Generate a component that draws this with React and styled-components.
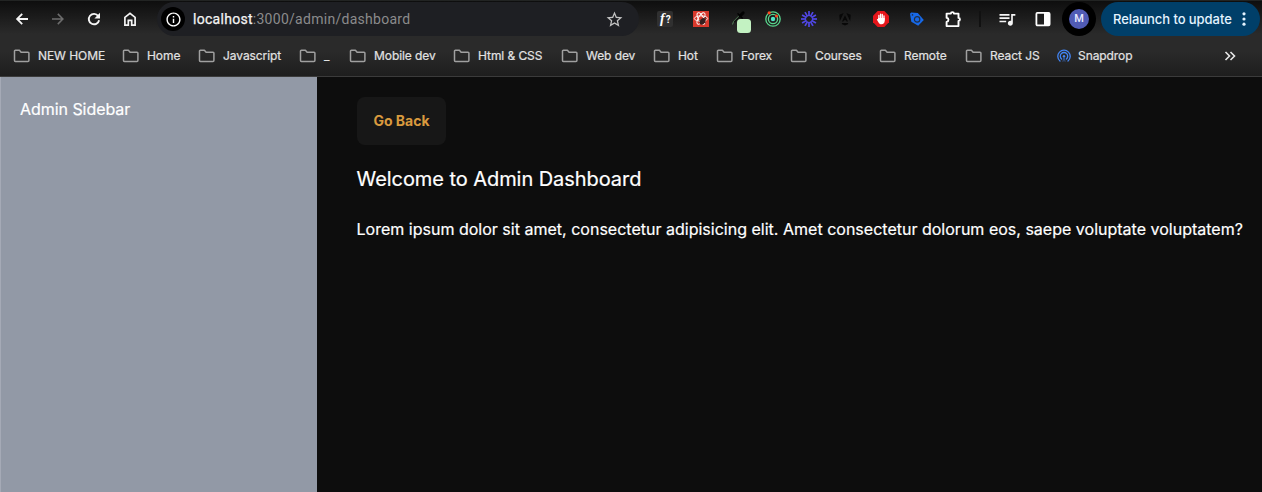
import React from 'react';
import styled, { createGlobalStyle } from 'styled-components';
import { MdStarBorder, MdInfoOutline, MdQueueMusic } from 'react-icons/md';

const GlobalStyle = createGlobalStyle`
  * { box-sizing: border-box; }
  body { margin: 0; background: #0d0d0d; font-family: Inter, "Liberation Sans", sans-serif; }
`;

const Window = styled.div`
  display: flex;
  flex-direction: column;
  width: 100%;
  height: 100vh;
  overflow: hidden;
`;

const Chrome = styled.header`
  flex: none;
  height: 77px;
  border-top: 1px solid #222423;
  border-bottom: 1px solid #3b3b3b;
  background: linear-gradient(#0e0e0e 0, #2a2a2a 33px, #2a2a2a 50px, #1e1e1e 75px);
`;

const Toolbar = styled.div`
  display: flex;
  align-items: center;
  height: 34px;
  margin-top: 1px;
  padding: 0 2px 0 4px;
`;

const ToolButton = styled.span`
  display: flex;
  align-items: center;
  justify-content: center;
  flex: none;
  width: 36px;
  height: 34px;
  color: ${(p) => (p.$muted ? '#6d6d6d' : '#f5f5f5')};
`;

const AddressBar = styled.div`
  display: flex;
  align-items: center;
  flex: none;
  width: 482px;
  height: 34px;
  margin: 0 8px 0 9px;
  padding: 0 15px 0 4px;
  border-radius: 17px;
  background: #1e1f23;
`;

const InfoBadge = styled.span`
  display: flex;
  align-items: center;
  justify-content: center;
  width: 24px;
  height: 24px;
  border-radius: 50%;
  background: #000;
  color: #fff;
`;

const Url = styled.span`
  flex: 1;
  margin-left: 8px;
  color: #8b8b8c;
  font: 400 14px Roboto, sans-serif;
  letter-spacing: 0.28px;
`;

const Host = styled.span`
  color: #f4f4f4;
  -webkit-text-stroke: 0.25px;
`;

const Divider = styled.span`
  flex: none;
  width: 2px;
  height: 16px;
  margin: 0 8px;
  background: #111;
`;

const Profile = styled.span`
  display: flex;
  align-items: center;
  justify-content: center;
  flex: none;
  width: 34px;
  height: 34px;
  margin: 0 5px 0 1px;
  border-radius: 50%;
  background: #000;
`;

const Avatar = styled.span`
  width: 20px;
  height: 20px;
  border-radius: 50%;
  background: #505bb5;
  color: #e8eaff;
  font: 500 11px/20px Roboto, sans-serif;
  text-align: center;
`;

const Relaunch = styled.div`
  display: flex;
  align-items: center;
  justify-content: space-between;
  flex: none;
  width: 159px;
  height: 34px;
  padding: 0 14px 0 12px;
  border-radius: 17px;
  background: #003f69;
  color: #e4f3ff;
  font-size: 13px;
  font-weight: 500;
  letter-spacing: -0.06px;
  white-space: nowrap;
`;

const Bookmarks = styled.nav`
  display: flex;
  align-items: center;
  height: 39px;
  padding-left: 13px;
`;

const Bookmark = styled.span`
  display: flex;
  align-items: center;
  gap: 7px;
  flex: none;
  width: ${(p) => p.$width}px;
  color: #e2e2e2;
  font-size: 12px;
  letter-spacing: -0.07px;
  -webkit-text-stroke: 0.2px;
  white-space: nowrap;
`;

const Overflow = styled.span`
  display: flex;
  margin-left: 47px;
`;

const Page = styled.div`
  display: flex;
  flex: 1;
  -webkit-text-stroke: 0.2px;
`;

const Sidebar = styled.aside`
  flex: none;
  width: 317px;
  padding: 20px 19px;
  border-left: 1px solid #a5aab6;
  background: #9299a6;
  color: #fff;
  font-size: 16px;
  letter-spacing: -0.05px;
  line-height: 24px;
`;

const Content = styled.main`
  flex: 1;
  padding: 20px 0 0 40px;
  background: #0d0d0d;
  color: #fff;
`;

const BackButton = styled.button`
  display: block;
  width: 89px;
  height: 48px;
  padding: 0 0 2px;
  border: 0;
  border-radius: 8px;
  background: #171717;
  color: #d99a3e;
  font: 700 14px Inter, sans-serif;
  -webkit-text-stroke: 0;
`;

const Title = styled.h1`
  margin: 20px 0 0;
  font-size: 20px;
  font-weight: 400;
  letter-spacing: -0.06px;
  text-indent: -0.5px;
  line-height: 28px;
  white-space: nowrap;
`;

const Paragraph = styled.p`
  margin: 24px 0 0;
  font-size: 16px;
  line-height: 24px;
  text-indent: -0.5px;
  letter-spacing: 0.008px;
  white-space: nowrap;
`;

const Svg = ({ size = 16, children, ...rest }) => (
  <svg width={size} height={size} viewBox={`0 0 ${size} ${size}`} fill="none" {...rest}>{children}</svg>
);

const BackIcon = () => (
  <Svg stroke="currentColor" strokeWidth="1.8">
    <path d="M14 8H3.4M8.2 2.9 3.1 8l5.1 5.1" />
  </Svg>
);

const ForwardIcon = () => (
  <Svg stroke="currentColor" strokeWidth="1.5">
    <path d="M2 8h10.6M7.8 2.9 12.9 8l-5.1 5.1" />
  </Svg>
);

const ReloadIcon = () => (
  <Svg stroke="currentColor" strokeWidth="1.9">
    <path d="M13.1 9.2A5.2 5.2 0 1 1 12.2 5" />
    <path d="M14 1.8v5.6H8.4z" fill="currentColor" stroke="none" />
  </Svg>
);

const HomeIcon = () => (
  <Svg stroke="currentColor" strokeWidth="1.7">
    <path d="M2.9 14.1V6.3L8 2.4l5.1 3.9v7.8H9.7V9.4H6.3v4.7z" />
  </Svg>
);

const FolderIcon = () => (
  <svg width="18" height="14" viewBox="0 0 18 14" fill="none" stroke="#a0a0a0" strokeWidth="1.5" strokeLinejoin="round">
    <path d="M1.5 2.2c0-.6.3-.9.9-.9h4l1.7 1.9h6.9c.6 0 .9.3.9.9v7.4c0 .6-.3.9-.9.9H2.4c-.6 0-.9-.3-.9-.9z" />
  </svg>
);

const FontIcon = () => (
  <Svg>
    <rect width="16" height="16" rx="2" fill="#303030" />
    <text x="3" y="12" fill="#fff" fontFamily="Liberation Serif" fontStyle="italic" fontWeight="700" fontSize="14">f</text>
    <text x="8.8" y="11.5" fill="#fff" fontFamily="Roboto" fontWeight="700" fontSize="10">?</text>
  </Svg>
);

const ReactBugIcon = () => (
  <Svg>
    <path d="M0 0h16v16H0z" fill="#d9392c" />
    <g stroke="#fff" strokeWidth="0.9">
      <ellipse cx="8" cy="7.5" rx="6.7" ry="2.6" />
      <ellipse cx="8" cy="7.5" rx="6.4" ry="2.6" transform="rotate(60 8 7.5)" />
      <ellipse cx="8" cy="7.5" rx="6.4" ry="2.6" transform="rotate(120 8 7.5)" />
    </g>
    <ellipse cx="9.6" cy="10.3" rx="2.5" ry="3.6" fill="#35201f" transform="rotate(35 9.6 10.3)" />
    <path d="M6 9.5l7 2.5M7 13l5.5-5M11 7l2-.5" stroke="#35201f" strokeWidth=".8" />
  </Svg>
);

const PickerIcon = () => (
  <svg width="20" height="22" viewBox="0 0 20 22" fill="none">
    <path d="M1.4 16.5 2.5 13.7 8.5 7.6" stroke="#4d7251" strokeWidth="1.1" />
    <path d="M3.3 14.3 9.3 8.2" stroke="#111" strokeWidth="1.6" />
    <path d="m9.1 7.9 3-3" stroke="#030303" strokeWidth="3" strokeLinecap="round" />
    <path d="m7 5.8 4.2 4.2" stroke="#030303" strokeWidth="1.5" strokeLinecap="round" />
    <rect x="6" y="11" width="14" height="14" rx="3.5" fill="#c3f2c2" />
  </svg>
);

const Picker = styled.span`
  display: flex;
  flex: none;
  width: 36px;
  height: 34px;
  padding: 6px 0 0 12px;
  svg { overflow: visible; }
`;

const TargetIcon = () => (
  <Svg>
    <g stroke="#58d68d" strokeWidth="1.3">
      <circle cx="8" cy="8" r="7.2" />
      <circle cx="8" cy="8" r="4.6" />
    </g>
    <circle cx="8" cy="8" r="2.2" fill="#50e3c2" />
    <circle cx="4.2" cy="1.8" r="1.6" fill="#ff4b22" />
    <circle cx="11.5" cy="5" r="1.5" fill="#ff4b22" />
  </Svg>
);

const BurstIcon = () => (
  <Svg stroke="#5047e5" strokeWidth="1.7">
    {[0, 30, 60, 90, 120, 150, 180, 210, 240, 270, 300, 330].map((a) => (
      <path key={a} d="M8 0v5" transform={`rotate(${a} 8 8)`} />
    ))}
    <circle cx="8" cy="8" r="3.5" strokeWidth="1" />
  </Svg>
);

const AngularIcon = () => (
  <Svg fill="#080808">
    <path d="M6.6 2 2.3 3.8l.5 6.5zM9.4 2l4.3 1.8-.5 6.5zM5.2 12h5.6l.5 1L8 14.6 4.7 13z" />
    <path d="m8 4.2 3 6.2H9.6L9 9.2H7l-.6 1.2H5z" fill="#080808" />
  </Svg>
);

const HandIcon = () => (
  <Svg>
    <path d="M4.7 0h6.6L16 4.7v6.6L11.3 16H4.7L0 11.3V4.7z" fill="#e5161b" />
    <path d="M5.9 8V4.5M7.6 7.5V3.1M9.3 7.5V3.5M11 9V5" stroke="#fff" strokeWidth="1.3" strokeLinecap="round" />
    <path d="M5.2 7h6.5v2.7c0 2-1.2 3.5-3.2 3.5-1.6 0-2.3-.6-3.1-2L3.9 8.8c-.2-.8.6-1 1-.6z" fill="#fff" />
  </Svg>
);

const TagIcon = () => (
  <Svg>
    <path d="m1 2.8 1.2-1.3 6.6.6 6 7-5.6 5.6-6.9-4z" fill="#1769e8" />
    <circle cx="8.1" cy="8.4" r="2.7" stroke="#202e45" strokeWidth="1.2" />
    <circle cx="3.5" cy="3.9" r=".8" fill="#202e45" />
  </Svg>
);

const PuzzleIcon = () => (
  <Svg size={18} stroke="#fff" strokeWidth="1.9" strokeLinejoin="round">
    <path d="M2.6 3.6h4.3c0-2 3-2 3 0h4.6v4.3c1.9 0 1.9 3 0 3v5.2H2.6v-4.2c2.5-.4 2.5-3.7 0-4.1z" />
  </Svg>
);

const PanelIcon = () => (
  <Svg>
    <rect x="1.4" y="1.9" width="13.2" height="12.4" rx="1" stroke="#fff" strokeWidth="1.8" />
    <path d="M9 2h5v12H9z" fill="#fff" />
  </Svg>
);

const DotsIcon = () => (
  <svg width="4" height="16" viewBox="0 0 4 16" fill="#e4f3ff">
    <circle cx="2" cy="2.8" r="1.6" /><circle cx="2" cy="8" r="1.6" /><circle cx="2" cy="13.2" r="1.6" />
  </svg>
);

const SnapdropIcon = () => (
  <Svg size={14} stroke="#4285f4" strokeWidth="1.3" strokeLinecap="round">
    <path d="M3 12.1a6.2 6.2 0 1 1 8 0M4.6 10a3.7 3.7 0 1 1 4.8 0" />
    <circle cx="7" cy="7.2" r="1.2" fill="#4285f4" stroke="none" />
    <path d="m6 12.3 1-4 1 4" strokeWidth="0.5" />
  </Svg>
);

const bookmarks = [
  ['NEW HOME', 109], ['Home', 76], ['Javascript', 101], ['_', 50], ['Mobile dev', 104],
  ['Html & CSS', 108], ['Web dev', 92], ['Hot', 63], ['Forex', 74], ['Courses', 89],
  ['Remote', 86], ['React JS', 92],
];

const extensions = [TargetIcon, BurstIcon, AngularIcon, HandIcon, TagIcon, PuzzleIcon];

export default function App() {
  return (
    <Window>
      <GlobalStyle />
      <Chrome>
        <Toolbar>
          <ToolButton><BackIcon /></ToolButton>
          <ToolButton $muted><ForwardIcon /></ToolButton>
          <ToolButton><ReloadIcon /></ToolButton>
          <ToolButton><HomeIcon /></ToolButton>
          <AddressBar>
            <InfoBadge><MdInfoOutline size={17} /></InfoBadge>
            <Url><Host>localhost</Host>:3000/admin/dashboard</Url>
            <MdStarBorder size={19} color="#c2c2c2" />
          </AddressBar>
          <ToolButton><FontIcon /></ToolButton>
          <ToolButton><ReactBugIcon /></ToolButton>
          <Picker><PickerIcon /></Picker>
          {extensions.map((Icon, i) => <ToolButton key={i}><Icon /></ToolButton>)}
          <Divider />
          <ToolButton><MdQueueMusic size={20} /></ToolButton>
          <ToolButton><PanelIcon /></ToolButton>
          <Profile><Avatar>M</Avatar></Profile>
          <Relaunch>Relaunch to update<DotsIcon /></Relaunch>
        </Toolbar>
        <Bookmarks>
          {bookmarks.map(([label, width]) => (
            <Bookmark key={label} $width={width}><FolderIcon />{label}</Bookmark>
          ))}
          <Bookmark $width={120}><SnapdropIcon />Snapdrop</Bookmark>
          <Overflow>
            <svg width="12" height="10" viewBox="0 0 12 10" fill="none" stroke="#e8e8e8" strokeWidth="1.6">
              <path d="m1.5 1 4 4-4 4M6.5 1l4 4-4 4" />
            </svg>
          </Overflow>
        </Bookmarks>
      </Chrome>
      <Page>
        <Sidebar>Admin Sidebar</Sidebar>
        <Content>
          <BackButton>Go Back</BackButton>
          <Title>Welcome to Admin Dashboard</Title>
          <Paragraph>Lorem ipsum dolor sit amet, consectetur adipisicing elit. Amet consectetur dolorum eos, saepe voluptate voluptatem?</Paragraph>
        </Content>
      </Page>
    </Window>
  );
}
